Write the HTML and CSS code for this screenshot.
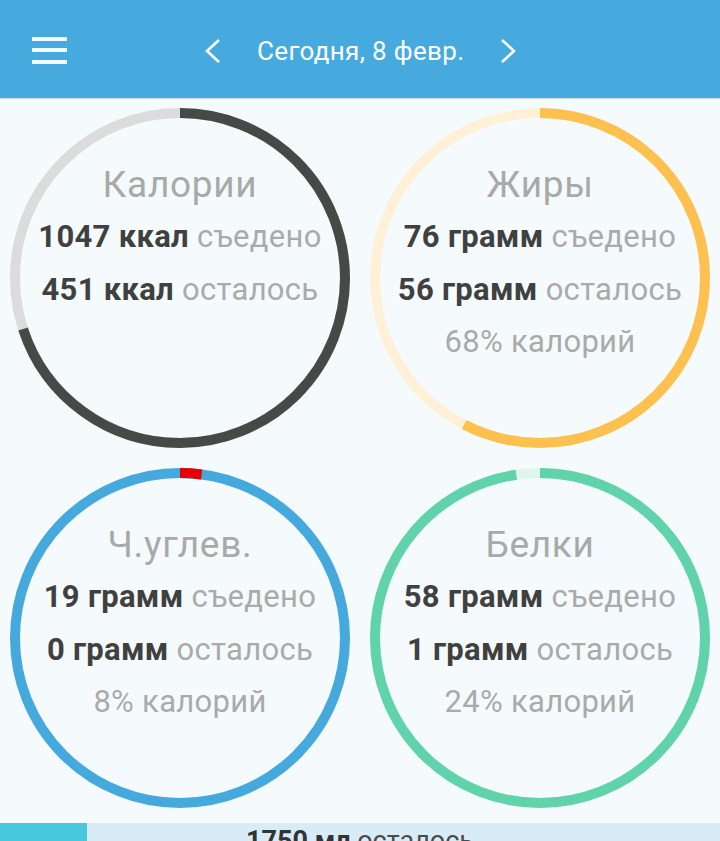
FILE: index.html
```html
<!DOCTYPE html>
<html lang="ru">
<head>
<meta charset="utf-8">
<title>Дневник</title>
<link rel="stylesheet" href="styles.css">
</head>
<body>
<header class="topbar">
  <div class="menu" aria-label="Меню">
    <span class="bar"></span><span class="bar"></span><span class="bar"></span>
  </div>
  <div class="datenav">
    <svg class="chev" width="16" height="26" viewBox="0 0 16 26"><polyline points="14,2 2,13 14,24" fill="none" stroke="#fff" stroke-width="2.6"/></svg>
    <span class="date">Сегодня, 8 февр.</span>
    <svg class="chev" width="16" height="26" viewBox="0 0 16 26"><polyline points="2,2 14,13 2,24" fill="none" stroke="#fff" stroke-width="2.6"/></svg>
  </div>
</header>

<main class="grid">
  <section class="cell">
    <svg class="ring" width="340" height="340" viewBox="0 0 340 340">
      <circle class="track" cx="170" cy="170" r="165" pathLength="100" stroke="#dcdcdc"/>
      <circle class="arc" cx="170" cy="170" r="165" pathLength="100" stroke="#464946" stroke-dasharray="70 100"/>
    </svg>
    <div class="info">
      <div class="title">Калории</div>
      <div class="line"><b>1047 ккал</b> съедено</div>
      <div class="line"><b>451 ккал</b> осталось</div>
    </div>
  </section>

  <section class="cell">
    <svg class="ring" width="340" height="340" viewBox="0 0 340 340">
      <circle class="track" cx="170" cy="170" r="165" pathLength="100" stroke="#fff1d8"/>
      <circle class="arc" cx="170" cy="170" r="165" pathLength="100" stroke="#fec04f" stroke-dasharray="57.6 100"/>
    </svg>
    <div class="info">
      <div class="title">Жиры</div>
      <div class="line"><b>76 грамм</b> съедено</div>
      <div class="line"><b>56 грамм</b> осталось</div>
      <div class="line">68% калорий</div>
    </div>
  </section>

  <section class="cell">
    <svg class="ring" width="340" height="340" viewBox="0 0 340 340">
      <circle class="track" cx="170" cy="170" r="165" pathLength="100" stroke="#46a9de"/>
      <circle class="arc" cx="170" cy="170" r="165" pathLength="100" stroke="#e60000" stroke-dasharray="2.1 100"/>
    </svg>
    <div class="info">
      <div class="title">Ч.углев.</div>
      <div class="line"><b>19 грамм</b> съедено</div>
      <div class="line"><b>0 грамм</b> осталось</div>
      <div class="line">8% калорий</div>
    </div>
  </section>

  <section class="cell">
    <svg class="ring" width="340" height="340" viewBox="0 0 340 340">
      <circle class="track" cx="170" cy="170" r="165" pathLength="100" stroke="#def6ed"/>
      <circle class="arc" cx="170" cy="170" r="165" pathLength="100" stroke="#60d3ab" stroke-dasharray="97.7 100"/>
    </svg>
    <div class="info">
      <div class="title">Белки</div>
      <div class="line"><b>58 грамм</b> съедено</div>
      <div class="line"><b>1 грамм</b> осталось</div>
      <div class="line">24% калорий</div>
    </div>
  </section>
</main>

<div class="water">
  <div class="water-fill" style="width: 87px"></div>
  <div class="water-text"><b>1750 мл</b> осталось</div>
</div>
</body>
</html>
```

FILE: styles.css
```css
* { box-sizing: border-box; }
html, body {
  margin: 0;
  padding: 0;
}
body {
  width: 720px;
  height: 841px;
  overflow: hidden;
  background: #f5fbfc;
  font-family: Roboto, "Noto Sans", sans-serif;
}

.topbar {
  height: 98px;
  background: #47aadf;
  display: flex;
  align-items: center;
  position: relative;
  box-shadow: 0 1px 1px rgba(0, 0, 0, 0.12);
}
.menu {
  width: 35px;
  margin-left: 32px;
  margin-top: 2px;
  display: flex;
  flex-direction: column;
  gap: 7.5px;
}
.bar {
  display: block;
  height: 4px;
  background: #f2fbff;
}
.datenav {
  display: flex;
  align-items: center;
  margin-left: 138px;
  margin-top: 4px;
}
.chev { display: block; }
.date {
  color: #fff;
  font-size: 26px;
  letter-spacing: 0.35px;
  margin: 0 36px 0 36px;
}

.grid {
  display: grid;
  grid-template-columns: 360px 360px;
  grid-template-rows: 360px 360px;
}
.cell {
  display: grid;
  justify-items: center;
}
.cell > * { grid-area: 1 / 1; }
.ring {
  margin-top: 10px;
  transform: rotate(-90deg);
}
.ring circle {
  fill: none;
  stroke-width: 10;
}
.info {
  padding-top: 60px;
  text-align: center;
  color: #aaaaaa;
  white-space: nowrap;
}
.title {
  font-size: 37px;
  letter-spacing: 0.7px;
  line-height: 53px;
  color: #a9a9a9;
}
.line {
  font-size: 31px;
  letter-spacing: 0.3px;
  line-height: 52.5px;
}
.line b {
  color: #3f403f;
  font-weight: 700;
}

.water {
  margin-top: 5px;
  height: 40px;
  background: #d8ecf7;
  display: flex;
  position: relative;
}
.water-fill {
  background: #48c8dd;
  height: 100%;
}
.water-text {
  position: absolute;
  left: 0;
  right: 0;
  top: 0;
  text-align: center;
  font-size: 27px;
  line-height: 30px;
  color: #4a4a4a;
  padding-top: 3px;
}
.water-text b { color: #333; }
```
